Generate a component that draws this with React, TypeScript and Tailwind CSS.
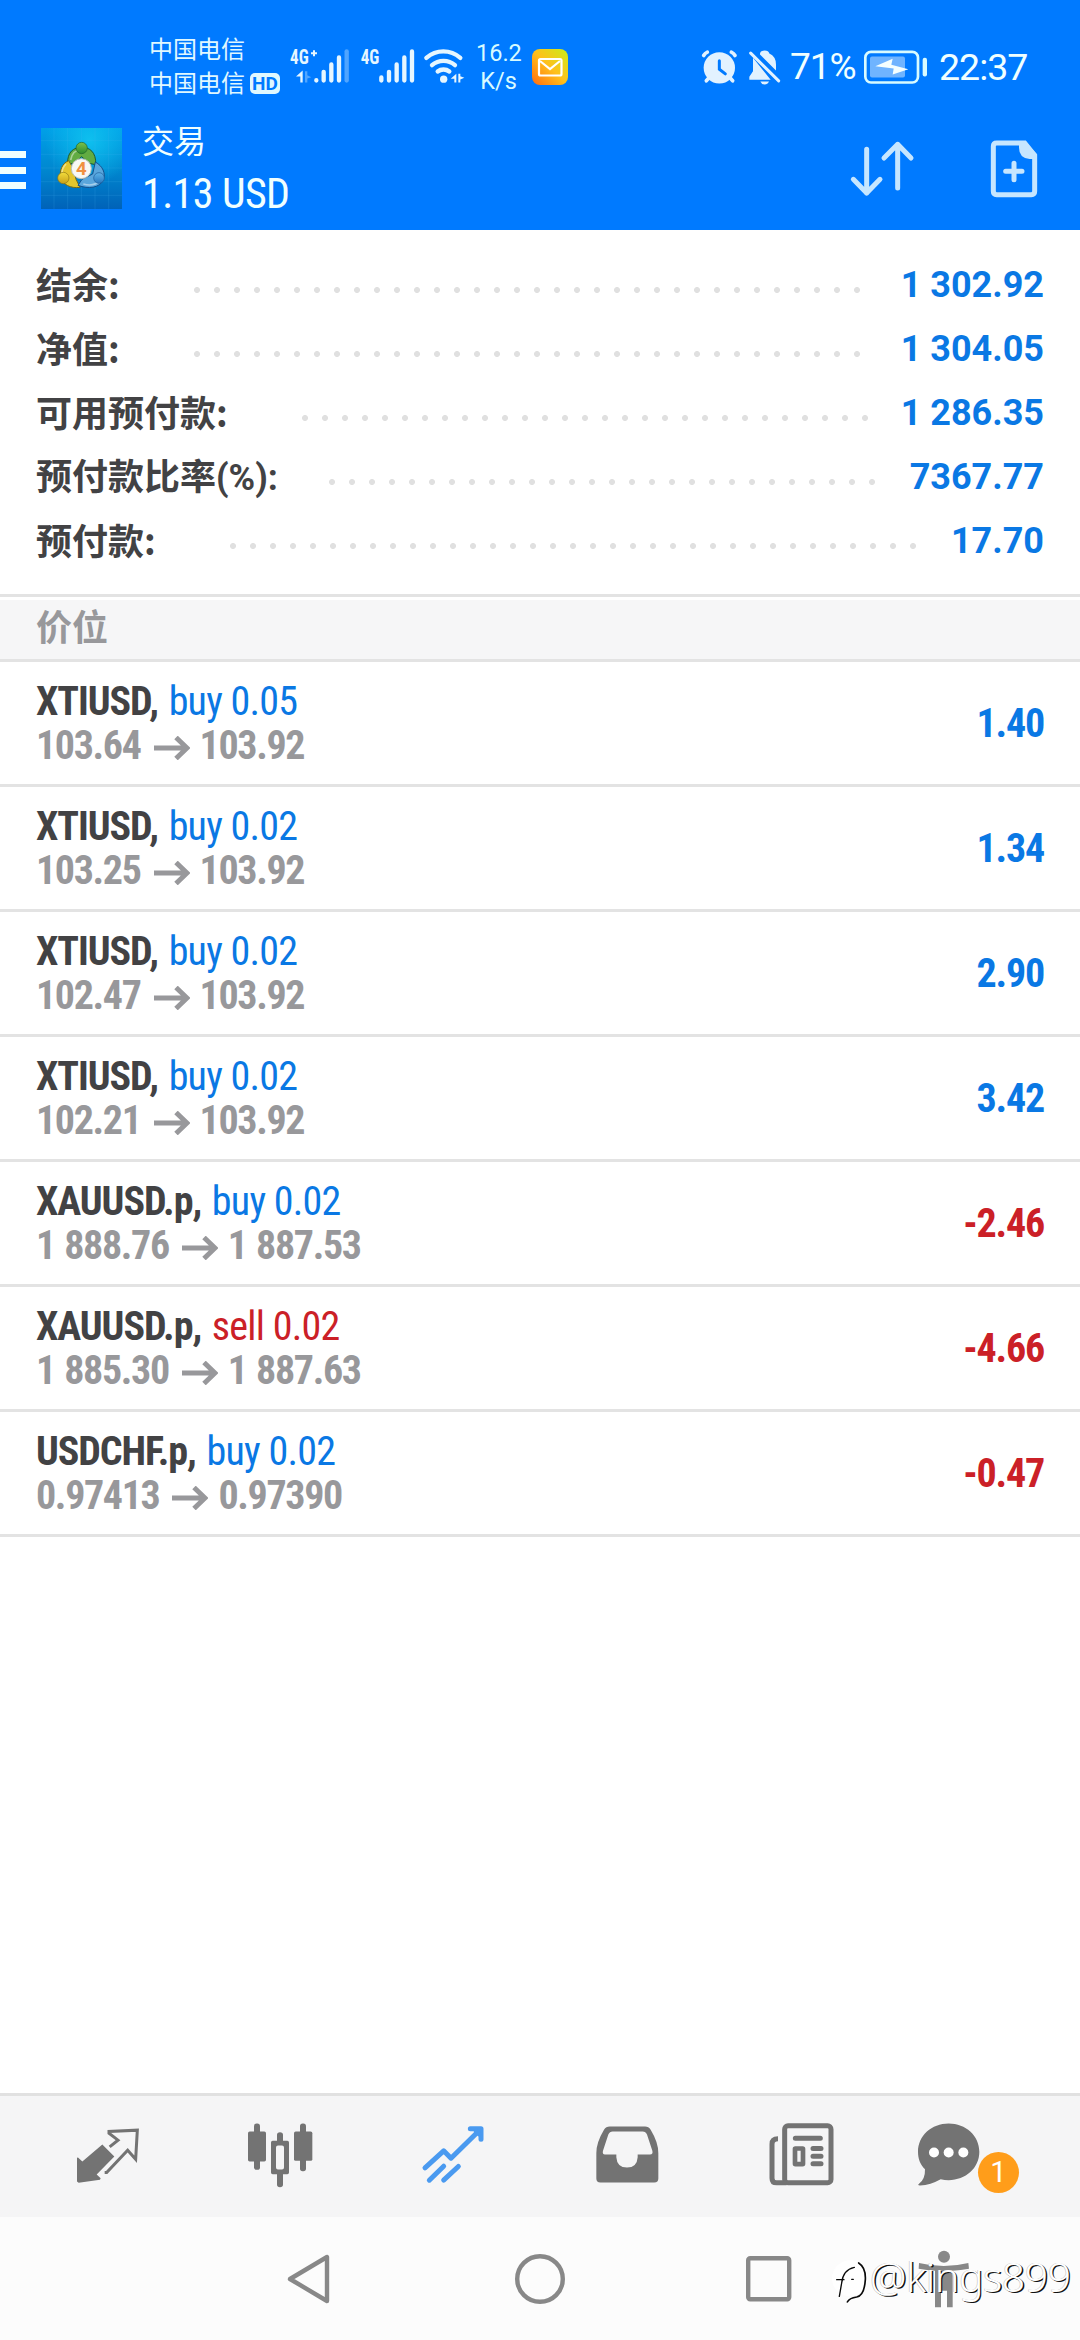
import React from "react";

const summary = [
  { label: "结余:", value: "1 302.92", labelClass: "w-[187px] -mt-1 font-['Noto_Sans_CJK_SC',sans-serif]", dotsWidth: "w-[680px]" },
  { label: "净值:", value: "1 304.05", labelClass: "w-[187px] -mt-1 font-['Noto_Sans_CJK_SC',sans-serif]", dotsWidth: "w-[680px]" },
  { label: "可用预付款:", value: "1 286.35", labelClass: "w-[295px] -mt-1 font-['Noto_Sans_CJK_SC',sans-serif]", dotsWidth: "w-[580px]" },
  { label: "预付款比率(%):", value: "7367.77", labelClass: "w-[322px] mt-[2px]", dotsWidth: "w-[560px]" },
  { label: "预付款:", value: "17.70", labelClass: "w-[223px] -mt-1 font-['Noto_Sans_CJK_SC',sans-serif]", dotsWidth: "w-[700px]" },
];

const positions = [
  { symbol: "XTIUSD", side: "buy", volume: "0.05", open: "103.64", current: "103.92", profit: "1.40" },
  { symbol: "XTIUSD", side: "buy", volume: "0.02", open: "103.25", current: "103.92", profit: "1.34" },
  { symbol: "XTIUSD", side: "buy", volume: "0.02", open: "102.47", current: "103.92", profit: "2.90" },
  { symbol: "XTIUSD", side: "buy", volume: "0.02", open: "102.21", current: "103.92", profit: "3.42" },
  { symbol: "XAUUSD.p", side: "buy", volume: "0.02", open: "1 888.76", current: "1 887.53", profit: "-2.46" },
  { symbol: "XAUUSD.p", side: "sell", volume: "0.02", open: "1 885.30", current: "1 887.63", profit: "-4.66" },
  { symbol: "USDCHF.p", side: "buy", volume: "0.02", open: "0.97413", current: "0.97390", profit: "-0.47" },
];

const SignalIcons = () => (
  <svg className="ml-[9px] h-[42px] w-[180px] shrink-0" viewBox="30 76.5 540 126" fill="#e6f6ff">
    <g className="font-['Roboto_Condensed'] font-bold" fontSize="58">
      <text x="30" y="131" textLength="56" lengthAdjust="spacingAndGlyphs">4G</text>
      <text x="242" y="131" textLength="56" lengthAdjust="spacingAndGlyphs">4G</text>
    </g>
    <path d="M102 89v18M93 98h18" stroke="#e6f6ff" strokeWidth="6" />
    <path d="M68 150v36h-7v-18H48z" />
    <path d="M75 152v34h7v-12l12-4-12-6v-12z" opacity=".35" />
    <g stroke="#e6f6ff" strokeWidth="13" strokeLinecap="round">
      <path d="M109 179v1M131 154v26M154 132v48M177 111v69" />
      <path d="M200 93v87" opacity=".35" />
      <path d="M304 171v9M327 154v26M350 132v48M373 111v69M396 93v87" />
    </g>
    <g fill="none" stroke="#e6f6ff" strokeWidth="13" strokeLinecap="round">
      <path d="M439 112c30-26 72-26 102 0" />
      <path d="M456 134c20-17 49-17 69 0" />
      <path d="M473 153c10-8 25-8 35 0" />
    </g>
    <circle cx="491" cy="176" r="11" />
    <path d="M529 160v26h-6v-11h-11zM535 160v26h6v-9l12-5-12-5v-7z" />
  </svg>
);

const MailIcon = () => (
  <svg className="ml-[11px] h-9 w-9 shrink-0" viewBox="0 0 36 36">
    <defs>
      <linearGradient id="mail" x1="0" y1="1" x2="1" y2="0">
        <stop offset="0" stopColor="#ff6a10" />
        <stop offset=".5" stopColor="#ffc01c" />
        <stop offset="1" stopColor="#c8ee1c" />
      </linearGradient>
    </defs>
    <rect width="36" height="36" rx="8" fill="url(#mail)" />
    <rect x="7" y="10" width="22.5" height="16.5" rx="1.5" fill="none" stroke="#fff" strokeWidth="2.2" />
    <path d="M8 12l10 8 10-8" fill="none" stroke="#fff" strokeWidth="2.2" />
  </svg>
);

const AlarmBellIcons = () => (
  <svg className="ml-auto h-[42px] w-[82px] shrink-0" viewBox="60 76.5 246 126" fill="#e2f2ff">
    <g stroke="#e2f2ff" strokeWidth="11" strokeLinecap="round">
      <path d="M68 105q4-7 11-10M162 105q-4-7-11-10" fill="none" />
      <path d="M84 172l-8 9M147 172l8 9" />
    </g>
    <circle cx="115" cy="142" r="47" />
    <path d="M115 121v25l18 14" fill="none" stroke="#007aff" strokeWidth="9" strokeLinecap="round" />
    <path d="M216 112v40l-11 17v9h64zM237 102q-1-11 14-12 12 0 14 9 20 9 20 33v18z" />
    <path d="M238 183h26q-4 9-13 9t-13-9z" />
    <path d="M209 98l84 83" stroke="#e2f2ff" strokeWidth="9" strokeLinecap="round" />
  </svg>
);

const BatteryIcon = () => (
  <svg className="h-[42px] w-[66px] shrink-0" viewBox="546 76.5 198 126">
    <rect x="553" y="94" width="158" height="92" rx="17" fill="none" stroke="#d8fbff" strokeWidth="8" />
    <rect x="567" y="108" width="105" height="63" rx="6" fill="#6fb4ff" />
    <path d="M583 137l52-22-4 18 51 13-47 16 3-18z" fill="#f4ffff" />
    <rect x="725" y="112" width="13" height="56" rx="6" fill="#d8fbff" />
  </svg>
);

const AppLogo = () => (
  <svg className="ml-[15px] h-[81px] w-[81px] shrink-0" viewBox="123 324 243 243">
    <defs>
      <linearGradient id="tile" x1="0" y1="0" x2="0" y2="1">
        <stop offset="0" stopColor="#00a0e8" />
        <stop offset=".5" stopColor="#0088d0" />
        <stop offset="1" stopColor="#0062b8" />
      </linearGradient>
      <radialGradient id="glow" cx=".6" cy=".15" r=".55">
        <stop offset="0" stopColor="#10c4f0" stopOpacity=".9" />
        <stop offset="1" stopColor="#10c4f0" stopOpacity="0" />
      </radialGradient>
      <linearGradient id="green" x1="0" y1="0" x2="0" y2="1">
        <stop offset="0" stopColor="#7cc04c" />
        <stop offset="1" stopColor="#2e8c2c" />
      </linearGradient>
      <linearGradient id="yellow" x1="0" y1="0" x2="0" y2="1">
        <stop offset="0" stopColor="#f2dc3c" />
        <stop offset="1" stopColor="#c8a018" />
      </linearGradient>
      <linearGradient id="blue" x1="0" y1="0" x2="0" y2="1">
        <stop offset="0" stopColor="#60b4e8" />
        <stop offset="1" stopColor="#2878c0" />
      </linearGradient>
    </defs>
    <rect x="123" y="324" width="243" height="243" fill="url(#tile)" />
    <rect x="123" y="324" width="243" height="243" fill="url(#glow)" />
    <path
      d="M162 324v243M203 324v243M244 324v243M285 324v243M326 324v243M123 362h243M123 403h243M123 444h243M123 485h243M123 526h243"
      stroke="#50b8f0"
      strokeOpacity=".25"
      strokeWidth="2"
    />
    <g strokeLinejoin="round">
      <path d="M203 432c-2-36 18-50 42-50s44 14 42 52l-20-4-22-20-22 20z" fill="#62ac42" stroke="#1c5a30" strokeWidth="3" />
      <path d="M206 422c-20 8-28 30-24 50 6 22 30 34 58 30l-12-24-8-32z" fill="#e4c62c" stroke="#7a6a10" strokeWidth="3" />
      <path d="M286 426c22 12 32 34 24 54-12 24-44 28-76 16l12-18 32-16z" fill="#5aa6dc" stroke="#14508c" strokeWidth="3" />
      <path d="M212 420c4-22 16-30 30-30M186 460c0-14 6-22 12-28M250 492c20 6 38 2 50-10" fill="none" stroke="#fff" strokeOpacity=".45" strokeWidth="5" />
    </g>
    <circle cx="245" cy="384" r="17" fill="url(#green)" stroke="#1f6428" strokeWidth="2" />
    <circle cx="190" cy="474" r="17" fill="url(#yellow)" stroke="#8a7414" strokeWidth="2" />
    <circle cx="297" cy="474" r="16" fill="url(#blue)" stroke="#1c5c9c" strokeWidth="2" />
    <circle cx="244" cy="446" r="30" fill="#f8f8f4" stroke="#b8c0b8" strokeWidth="3" />
    <text x="244" y="465" textAnchor="middle" fontSize="56" fill="#f09040" className="font-['Roboto'] font-bold">4</text>
  </svg>
);

const SortIcon = () => (
  <svg className="h-[60px] w-[68px]" viewBox="504 354 204 180" fill="none" stroke="#c6e6ff" strokeWidth="15" strokeLinecap="round" strokeLinejoin="round">
    <path d="M560 388v131M520 478l40 41 40-41" />
    <path d="M653 504V373M612 414l41-41 40 41" />
  </svg>
);

const NewOrderIcon = () => (
  <svg className="ml-[72px] h-[60px] w-[54px]" viewBox="924 354 162 180" fill="none" stroke="#c6e6ff">
    <path d="M950 369h84l30 37v108q0 10-10 10H950q-10 0-10-10V379q0-10 10-10z" strokeWidth="15" />
    <path d="M1017 365h18l36 38v14h-22q-32-3-32-34z" fill="#c6e6ff" stroke="none" />
    <path d="M1002 430v49M977 454h49" strokeWidth="15" strokeLinecap="round" />
  </svg>
);

const QuotesIcon = () => (
  <svg className="h-20 w-20" viewBox="200 109.5 240 240">
    <path d="M306 192l36 36-53 54 12 11-2 5-64 9-5-4v-71l3-1 13 12z" fill="#737373" />
    <path d="M328 199l25-20-27-21v-5l85-4-5 87-24-27-63 67h-6" fill="none" stroke="#737373" strokeWidth="9" />
  </svg>
);

const ChartIcon = () => (
  <svg className="h-20 w-20" viewBox="720 109.5 240 240" fill="#737373">
    <rect x="762" y="129" width="18" height="139" rx="8" />
    <rect x="744" y="153" width="54" height="90" rx="5" />
    <rect x="900" y="129" width="18" height="143" rx="8" />
    <rect x="882" y="153" width="55" height="88" rx="5" />
    <path d="M831 190v-27q0-8 9-8t9 8v27zM831 275v37q0 8 9 8t9-8v-37z" />
    <path fillRule="evenodd" d="M818 181h44q5 0 5 5v90q0 5-5 5h-44q-5 0-5-5v-90q0-5 5-5zM834 195q-6 0-6 6v60q0 6 6 6h12q6 0 6-6v-60q0-6-6-6z" />
  </svg>
);

const TradeIcon = () => (
  <svg className="h-20 w-20" viewBox="160 109.5 240 240" fill="none" stroke="#4a9af0" strokeWidth="15" strokeLinecap="round" strokeLinejoin="round">
    <path d="M196 262l56-51 22 22 84-82" />
    <path d="M332 145h32v31" />
    <path d="M350 152l8 8" />
    <path d="M209 299l43-42M252 299l44-41" />
  </svg>
);

const HistoryIcon = () => (
  <svg className="h-20 w-20" viewBox="680 109.5 240 240">
    <path
      fill="#737373"
      fillRule="evenodd"
      d="M748 138h106q11 0 17 10 23 38 23 70v76q0 12-12 12H720q-12 0-12-12v-76q0-32 23-70 6-10 17-10zM757 153q-9 0-13 9l-16 49q-3 11 6 11h34v8q2 31 32 31t32-31v-8h37q10 0 7-11l-16-49q-4-9-13-9z"
    />
  </svg>
);

const NewsIcon = () => (
  <svg className="h-20 w-20" viewBox="120 109.5 240 240" fill="none" stroke="#737373" strokeWidth="15">
    <rect x="194" y="136" width="139" height="171" rx="10" />
    <path d="M174 175q-18 0-18 16v102q0 14 14 14h30" />
    <path d="M226 173h75M279 204h24M279 227h24M279 250h24" strokeLinecap="round" />
    <rect x="225" y="204" width="24" height="47" strokeWidth="14" rx="1" />
  </svg>
);

const MessagesIcon = () => (
  <svg className="h-20 w-[120px]" viewBox="580 109.5 360 240">
    <path d="M687 129c51 0 92 36 92 85s-41 85-92 85q-12 0-24-3-30 17-62 19-9 0-3-5 19-15 18-44c-14-13-21-31-21-52 0-49 41-85 92-85z" fill="#737373" />
    <g fill="#fff">
      <circle cx="643" cy="216" r="15" />
      <circle cx="687" cy="216" r="15" />
      <circle cx="731" cy="216" r="15" />
    </g>
  </svg>
);

const NavItem = ({ children }: { children: React.ReactNode }) => (
  <div className="relative flex flex-1 items-center justify-center">{children}</div>
);

const PositionRow = ({ position }: { position: (typeof positions)[number] }) => (
  <div className="flex h-[125px] items-center justify-between border-b-[3px] border-[#e3e3e3] px-9 pt-px font-['Roboto_Condensed'] text-[40px] leading-[44px]">
    <div>
      <div className="flex whitespace-pre">
        <span className="mr-[2.5px] font-bold tracking-[-1.05px] text-[#424244]">{position.symbol}, </span>
        <span className={position.side === "buy" ? "tracking-[-0.75px] text-[#0a78e4]" : "tracking-[-0.75px] text-[#cb2027]"}>
          {position.side} {position.volume}
        </span>
      </div>
      <div className="flex items-center font-bold tracking-[-1.35px] text-[#98989b] [word-spacing:1.5px]">
        <span>{position.open}</span>
        <svg className="mt-1 mr-[10px] ml-[13px] h-6 w-9" viewBox="0 0 36 24" fill="none" stroke="#98989b" strokeWidth="5">
          <path d="M0 12h33M22 1.5l11 10.5-11 10.5" />
        </svg>
        <span>{position.current}</span>
      </div>
    </div>
    <span
      className={
        position.profit.startsWith("-")
          ? "font-bold tracking-[-1.2px] text-[#cb2027]"
          : "font-bold tracking-[-1.2px] text-[#0a78e4]"
      }
    >
      {position.profit}
    </span>
  </div>
);

export default function App() {
  return (
    <div className="flex h-[2340px] w-[1080px] flex-col overflow-hidden bg-white font-['Roboto','Noto_Sans_CJK_SC',sans-serif]">
      <header className="h-[230px] bg-[#007aff] text-[#f0ffff]">
        {/* Status bar */}
        <div className="flex h-[110px] items-center pt-[23px] pr-[52px] pl-[149px]">
          <div className="w-[132px] text-[24px] leading-[34px] text-[#e0f8ff]">
            <div>中国电信</div>
            <div className="flex items-center">
              中国电信
              <span className="ml-[5px] flex h-[21px] w-[30px] items-center justify-center rounded-[5px] bg-[#e0f8ff] text-[19px] leading-none font-bold text-[#007aff]">
                HD
              </span>
            </div>
          </div>
          <SignalIcons />
          <div className="ml-[6px] w-[45px] text-center text-[23.5px] leading-[28px] whitespace-nowrap text-[#d8fbff]">
            <div>16.2</div>
            <div>K/s</div>
          </div>
          <MailIcon />
          <AlarmBellIcons />
          <span className="ml-[7px] w-[73px] text-[37px] leading-[42px] tracking-[-1px] whitespace-nowrap">71%</span>
          <BatteryIcon />
          <span className="ml-[10px] w-[89px] text-[37.5px] leading-[42px] tracking-[-1px] whitespace-nowrap">22:37</span>
        </div>

        {/* App bar */}
        <div className="flex h-[120px] items-center pr-[38px] pb-1">
          <div className="mt-1 flex w-[26px] flex-col gap-[8.5px]">
            <div className="h-[7px] bg-[#f0ffff]" />
            <div className="h-[7px] bg-[#f0ffff]" />
            <div className="h-[7px] bg-[#f0ffff]" />
          </div>
          <AppLogo />
          <div className="ml-[20px] flex-1">
            <div className="text-[32px] leading-[52px]">交易</div>
            <div className="font-['Roboto_Condensed'] text-[42px] leading-[52px] tracking-[-0.6px]">1.13 USD</div>
          </div>
          <SortIcon />
          <NewOrderIcon />
        </div>
      </header>

      {/* Account summary */}
      <section className="flex h-[367px] flex-col border-b-[3px] border-[#e3e3e3] pt-[23px] pr-9">
        {summary.map((row) => (
          <div key={row.label} className="flex h-16 items-center text-[36px] leading-[60px] font-bold whitespace-nowrap">
            <span className={`${row.labelClass} shrink-0 pl-9 text-[#424244]`}>{row.label}</span>
            <span
              className={`${row.dotsWidth} mt-[10px] h-2 shrink-0 bg-[radial-gradient(circle,#e0e0e0_2.6px,transparent_3.4px)] bg-[length:20px_8px]`}
            />
            <span className="ml-auto text-[#0a78e4]">{row.value}</span>
          </div>
        ))}
      </section>

      <div className="mt-[3px] flex h-[62px] shrink-0 items-center border-b-[3px] border-[#e3e3e3] bg-[#f6f6f7] pb-[2px] pl-9 text-[36px] leading-[56px] font-bold text-[#98989b]">
        价位
      </div>

      {/* Open positions */}
      <section className="flex-1">
        {positions.map((position, i) => (
          <PositionRow key={i} position={position} />
        ))}
      </section>

      {/* Tab bar */}
      <nav className="flex h-[124px] shrink-0 border-t-[3px] border-[#e1e1e1] bg-[#f5f5f6] px-5">
        <NavItem>
          <QuotesIcon />
        </NavItem>
        <NavItem>
          <ChartIcon />
        </NavItem>
        <NavItem>
          <TradeIcon />
        </NavItem>
        <NavItem>
          <HistoryIcon />
        </NavItem>
        <NavItem>
          <NewsIcon />
        </NavItem>
        <NavItem>
          <MessagesIcon />
          <span className="absolute top-[56px] right-[41px] flex h-[41px] w-[41px] items-center justify-center rounded-full bg-[#ff9d1a] text-[29px] leading-none text-white">
            1
          </span>
        </NavItem>
      </nav>

      {/* System navigation */}
      <div className="relative flex h-[123px] shrink-0 items-center bg-[#fcfcfc] pl-[286px]">
        <svg className="h-[52px] w-[46px]" viewBox="0 0 46 52" fill="none" stroke="#888" strokeWidth="4.4" strokeLinejoin="round">
          <path d="M41 4v44L4 26z" />
        </svg>
        <svg className="ml-[182px] h-[52px] w-[52px]" viewBox="0 0 52 52" fill="none" stroke="#888" strokeWidth="4.4">
          <circle cx="26" cy="26" r="22.8" />
        </svg>
        <svg className="ml-[178px] h-[52px] w-[50px]" viewBox="0 0 50 52" fill="none" stroke="#888" strokeWidth="4.4">
          <rect x="4.2" y="5.2" width="41" height="41" rx="2" />
        </svg>
        <svg className="absolute top-[18px] left-[820px] h-[90px] w-[260px]" viewBox="0 0 780 270">
          <circle cx="372" cy="65" r="18" fill="#888" />
          <path d="M297 84q75 18 148 0l2 17q-25 4-49 6v110h-17v-50h-18v50h-18V107q-24-2-49-6z" fill="#888" />
          <circle cx="90" cy="130" r="54" fill="#fff" />
          <g fill="none" stroke="#0a0a0a" strokeLinecap="round">
            <path d="M58 184l7-40q4-40 38-47" strokeWidth="4" />
            <path d="M50 134h22M95 133h5" strokeWidth="4" />
            <path d="M116 84q22 14 20 50-3 48-26 52-22 3-28 15" strokeWidth="5" />
          </g>
        </svg>
        <span className="absolute top-[29px] left-[870px] font-['Noto_Sans'] text-[41px] leading-[60px] font-light tracking-[-0.45px] text-white [text-shadow:1.4px_1.2px_0_#111,-0.5px_-0.4px_0_#bbb]">
          @kings899
        </span>
      </div>
    </div>
  );
}
